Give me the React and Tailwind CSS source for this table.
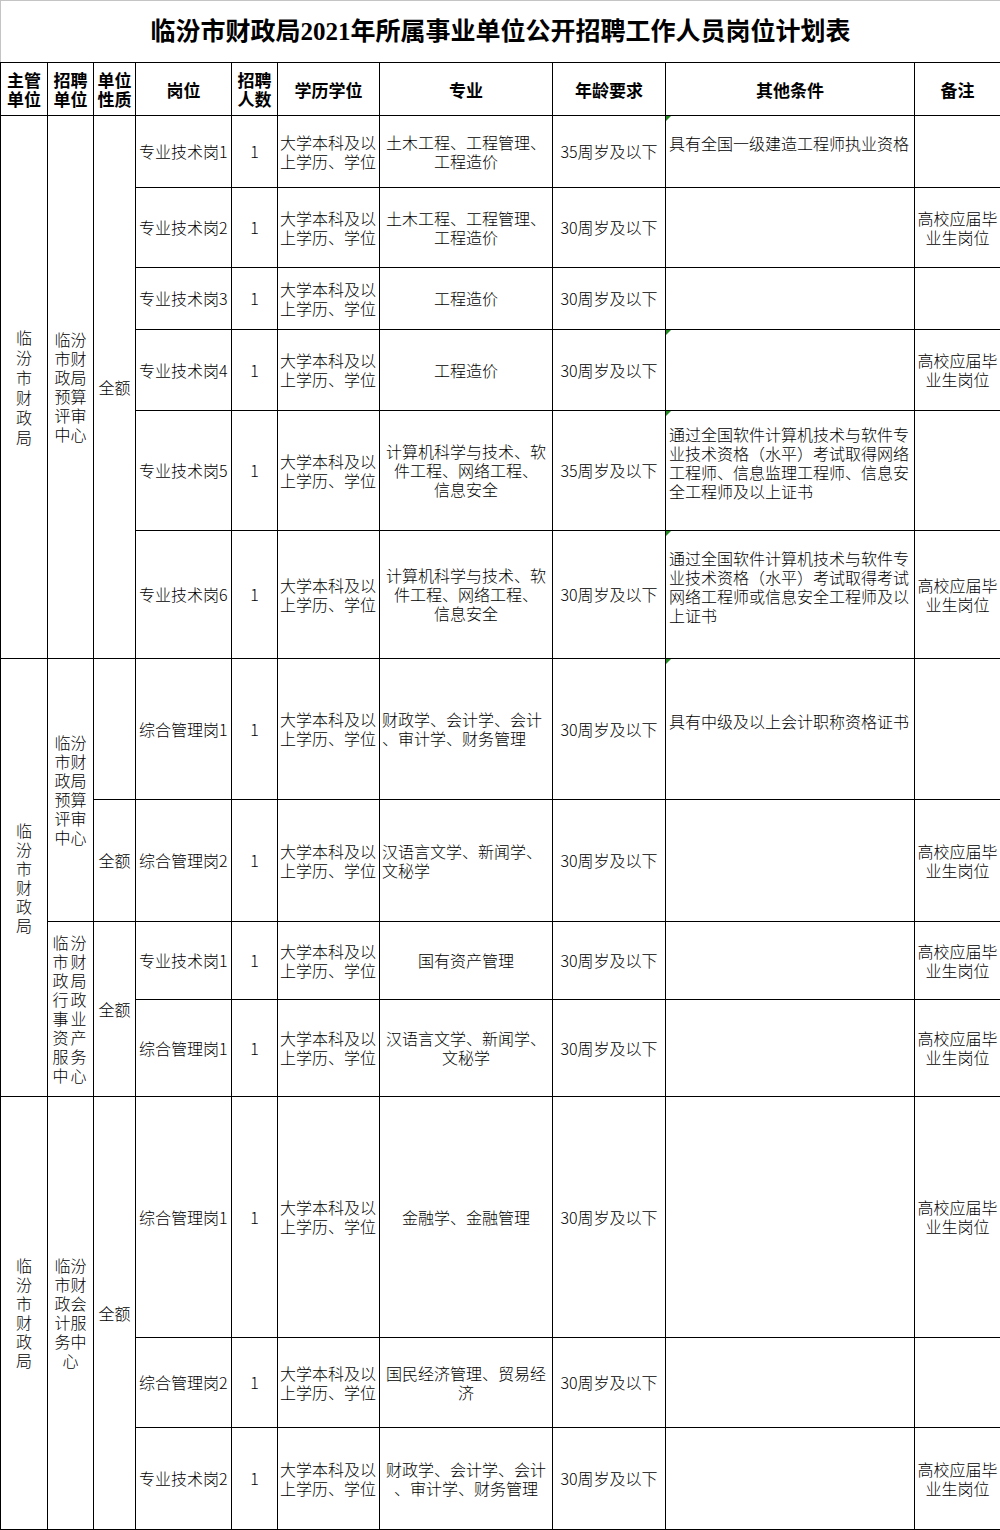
import React from "react";

const EDU = ["大学本科及以", "上学历、学位"];
const GRAD = ["高校应届毕", "业生岗位"];

const rows = [
  { h: "h-[72px]", post: "专业技术岗1", major: ["土木工程、工程管理、", "工程造价"], age: "35周岁及以下", other: ["具有全国一级建造工程师执业资格"], note: null, mark: true },
  { h: "h-[80px]", post: "专业技术岗2", major: ["土木工程、工程管理、", "工程造价"], age: "30周岁及以下", other: null, note: GRAD },
  { h: "h-[62px]", post: "专业技术岗3", major: ["工程造价"], age: "30周岁及以下", other: null, note: null },
  { h: "h-[81px]", post: "专业技术岗4", major: ["工程造价"], age: "30周岁及以下", other: null, note: GRAD, mark: true },
  {
    h: "h-[120px]", post: "专业技术岗5", major: ["计算机科学与技术、软", "件工程、网络工程、", "信息安全"], age: "35周岁及以下",
    other: ["通过全国软件计算机技术与软件专", "业技术资格（水平）考试取得网络", "工程师、信息监理工程师、信息安", "全工程师及以上证书"], note: null, mark: true,
  },
  {
    h: "h-[128px]", post: "专业技术岗6", major: ["计算机科学与技术、软", "件工程、网络工程、", "信息安全"], age: "30周岁及以下",
    other: ["通过全国软件计算机技术与软件专", "业技术资格（水平）考试取得考试", "网络工程师或信息安全工程师及以", "上证书"], note: GRAD, mark: true,
  },
  { h: "h-[141px]", post: "综合管理岗1", major: ["财政学、会计学、会计", "、审计学、财务管理"], left: true, age: "30周岁及以下", other: ["具有中级及以上会计职称资格证书"], note: null, mark: true },
  { h: "h-[122px]", post: "综合管理岗2", major: ["汉语言文学、新闻学、", "文秘学"], left: true, age: "30周岁及以下", other: null, note: GRAD },
  { h: "h-[78px]", post: "专业技术岗1", major: ["国有资产管理"], age: "30周岁及以下", other: null, note: GRAD },
  { h: "h-[97px]", post: "综合管理岗1", major: ["汉语言文学、新闻学、", "文秘学"], age: "30周岁及以下", other: null, note: GRAD },
  { h: "h-[241px]", post: "综合管理岗1", major: ["金融学、金融管理"], age: "30周岁及以下", other: null, note: GRAD },
  { h: "h-[90px]", post: "综合管理岗2", major: ["国民经济管理、贸易经", "济"], age: "30周岁及以下", other: null, note: null },
  { h: "h-[102px]", post: "专业技术岗2", major: ["财政学、会计学、会计", "、审计学、财务管理"], age: "30周岁及以下", other: null, note: GRAD },
];

// split a name into lines of n characters
function chunk(text, n) {
  const out = [];
  for (let i = 0; i < text.length; i += n) out.push(text.slice(i, i + n));
  return out;
}

function Lines({ lines }) {
  return lines.map((l, i) => (
    <div key={i} className="whitespace-nowrap">
      {l}
    </div>
  ));
}

const cell = "border border-black p-0 align-middle";

function LeadCells({ index }) {
  if (index === 0) {
    return (
      <>
        <td rowSpan={6} className={`${cell} text-center leading-[20px]`}>
          <Lines lines={chunk("临汾市财政局", 1)} />
        </td>
        <td rowSpan={6} className={`${cell} text-center leading-[19px]`}>
          <Lines lines={chunk("临汾市财政局预算评审中心", 2)} />
        </td>
        <td rowSpan={6} className={`${cell} text-center`}>全额</td>
      </>
    );
  }
  if (index === 6) {
    return (
      <>
        <td rowSpan={4} className={`${cell} text-center leading-[19px]`}>
          <Lines lines={chunk("临汾市财政局", 1)} />
        </td>
        <td rowSpan={2} className={`${cell} text-center leading-[19px]`}>
          <Lines lines={chunk("临汾市财政局预算评审中心", 2)} />
        </td>
        <td className={cell}></td>
      </>
    );
  }
  if (index === 7) {
    return <td className={`${cell} text-center`}>全额</td>;
  }
  if (index === 8) {
    return (
      <>
        <td rowSpan={2} className={`${cell} text-center leading-[19px] tracking-[2px]`}>
          <Lines lines={chunk("临汾市财政局行政事业资产服务中心", 2)} />
        </td>
        <td rowSpan={2} className={`${cell} text-center`}>全额</td>
      </>
    );
  }
  if (index === 10) {
    return (
      <>
        <td rowSpan={3} className={`${cell} text-center leading-[19px]`}>
          <Lines lines={chunk("临汾市财政局", 1)} />
        </td>
        <td rowSpan={3} className={`${cell} text-center leading-[19px]`}>
          <Lines lines={chunk("临汾市财政会计服务中心", 2)} />
        </td>
        <td rowSpan={3} className={`${cell} text-center`}>全额</td>
      </>
    );
  }
  return null;
}

export default function App() {
  return (
    <div className="w-[1000px] bg-white text-black font-['Noto_Sans_CJK_SC',sans-serif] text-[16px] font-light leading-[19px]">
      <table className="w-[1000px] table-fixed border-collapse">
        <colgroup>
          <col className="w-[47px]" />
          <col className="w-[46px]" />
          <col className="w-[42px]" />
          <col className="w-[96px]" />
          <col className="w-[46px]" />
          <col className="w-[102px]" />
          <col className="w-[173px]" />
          <col className="w-[113px]" />
          <col className="w-[249px]" />
          <col className="w-[86px]" />
        </colgroup>
        <tbody>
          {/* Title */}
          <tr className="h-[62px]">
            <td
              colSpan={10}
              className="border border-[#c4c4c4] border-b-black p-0 text-center align-middle font-['Liberation_Serif','Noto_Sans_CJK_SC',serif] text-[25px] font-bold"
            >
              临汾市财政局2021年所属事业单位公开招聘工作人员岗位计划表
            </td>
          </tr>

          {/* Header */}
          <tr className="h-[53px] text-[17px] font-bold leading-[19px]">
            <th className={`${cell} text-center`}><Lines lines={["主管", "单位"]} /></th>
            <th className={`${cell} text-center`}><Lines lines={["招聘", "单位"]} /></th>
            <th className={`${cell} text-center`}><Lines lines={["单位", "性质"]} /></th>
            <th className={`${cell} text-center`}>岗位</th>
            <th className={`${cell} text-center`}><Lines lines={["招聘", "人数"]} /></th>
            <th className={`${cell} text-center`}>学历学位</th>
            <th className={`${cell} text-center`}>专业</th>
            <th className={`${cell} text-center`}>年龄要求</th>
            <th className={`${cell} text-center`}>其他条件</th>
            <th className={`${cell} text-center`}>备注</th>
          </tr>

          {rows.map((r, i) => (
            <tr key={i} className={r.h}>
              <LeadCells index={i} />
              <td className={`${cell} pl-[3px] whitespace-nowrap`}>{r.post}</td>
              <td className={`${cell} text-center`}>1</td>
              <td className={`${cell} pl-[2px]`}>
                <Lines lines={EDU} />
              </td>
              <td className={`${cell} ${r.left ? "text-left pl-[2px]" : "text-center"}`}>
                <Lines lines={r.major} />
              </td>
              <td className={`${cell} text-center whitespace-nowrap`}>{r.age}</td>
              <td className={`${cell} relative pl-[3px] pb-[16px]`}>
                {r.mark && (
                  <span className="absolute left-0 top-0 h-0 w-0 border-t-[5px] border-r-[5px] border-t-[#1f8a1f] border-r-transparent" />
                )}
                {r.other && <Lines lines={r.other} />}
              </td>
              <td className={`${cell} text-center`}>
                {r.note && <Lines lines={r.note} />}
              </td>
            </tr>
          ))}
        </tbody>
      </table>
    </div>
  );
}
